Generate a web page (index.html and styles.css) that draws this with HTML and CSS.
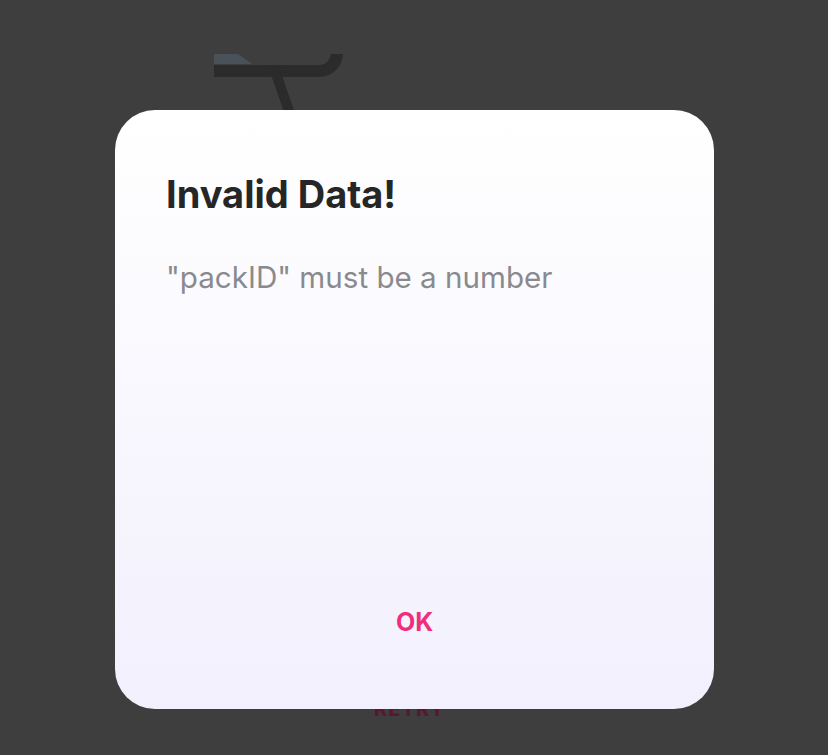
FILE: index.html
```html
<!DOCTYPE html>
<html lang="en">
<head>
  <meta charset="UTF-8">
  <meta name="viewport" content="width=device-width, initial-scale=1.0">
  <title>Invalid Data</title>
  <link rel="stylesheet" href="styles.css">
</head>
<body>

  <div class="screen">
    <svg class="bg-art" width="140" height="60" viewBox="0 0 140 60">
      <path d="M0 0 L24 0 L38 10 L0 10 Z" fill="#4a5159"/>
      <path d="M0 17 H105 A18 18 0 0 0 123 -1 V-10" stroke="#2b2b2b" stroke-width="12" fill="none"/>
      <path d="M60 14 L76 60" stroke="#2b2b2b" stroke-width="10" fill="none"/>
    </svg>
    <div class="retry">RETRY</div>

    <div class="overlay">
      <div class="dialog">
        <h2 class="dialog-title">Invalid Data!</h2>
        <p class="dialog-text">"packID" must be a number</p>
        <div class="dialog-actions">
          <button class="ok-btn">OK</button>
        </div>
      </div>
    </div>
  </div>

</body>
</html>
```

FILE: styles.css
```css
html, body {
  margin: 0;
  height: 100%;
}

body {
  font-family: Inter, "Noto Sans", sans-serif;
  background-color: #3e3e3e;
  overflow: hidden;
}

.screen {
  position: relative;
  width: 828px;
  height: 755px;
}

.bg-art {
  position: absolute;
  left: 214px;
  top: 54px;
}

.retry {
  position: absolute;
  left: 374px;
  top: 697px;
  font-size: 20px;
  font-weight: 800;
  letter-spacing: 1px;
  color: #561a30;
}

.overlay {
  position: absolute;
  inset: 0;
  display: flex;
  justify-content: center;
  padding-top: 110px;
}

.dialog {
  width: 599px;
  height: 599px;
  box-sizing: border-box;
  margin-left: 1px;
  padding: 61px 51px 0;
  border-radius: 40px;
  background: linear-gradient(to bottom, #ffffff, #f2f0fd);
  display: flex;
  flex-direction: column;
}

.dialog-title {
  margin: 0;
  font-size: 38px;
  font-weight: 700;
  color: #262626;
  line-height: 46px;
}

.dialog-text {
  margin: 42px 0 0;
  font-size: 29.6px;
  font-weight: 400;
  color: #8a8a8e;
  line-height: 36px;
}

.dialog-actions {
  margin-top: auto;
  display: flex;
  justify-content: center;
  padding-bottom: 72px;
}

.ok-btn {
  border: none;
  background: none;
  font-family: inherit;
  font-size: 25px;
  font-weight: 700;
  color: #ef2f7c;
  padding: 0;
}
```
